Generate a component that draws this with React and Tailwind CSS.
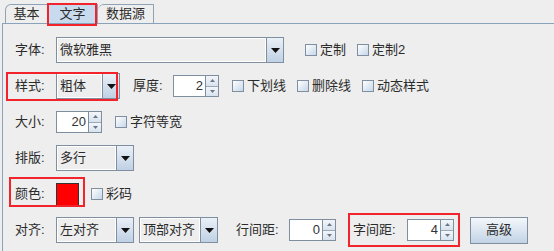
import React from "react";

// Swing (Metal) style text settings panel

function Combo({ value, className }) {
  return (
    <div className={`flex h-[26px] shrink-0 border border-[#7f8fa0] bg-[#eeeeee] ${className}`}>
      <div className="flex flex-1 items-center border border-white pl-[2px] pr-[2px]">{value}</div>
      <div className="flex w-[17px] items-center justify-center border-l border-[#7f8fa0] bg-linear-to-b from-[#eaf0f7] to-[#bfd1e4]">
        <svg width="9" height="5" viewBox="0 0 9 5">
          <path d="M0 0h9L4.5 5z" fill="#111" />
        </svg>
      </div>
    </div>
  );
}

function Spinner({ value, className }) {
  return (
    <div className={`flex h-[22px] shrink-0 border border-[#7f8fa0] ${className}`}>
      <div className="flex flex-1 items-center justify-end bg-white pr-[2px] text-[#333]">{value}</div>
      <div className="flex w-[13px] flex-col border-l border-[#7f8fa0]">
        <div className="flex flex-1 items-center justify-center border-b border-[#9aa9b8] bg-linear-to-b from-[#f3f6fa] to-[#d8e3ee]">
          <svg width="5" height="3" viewBox="0 0 5 3">
            <path d="M0 3h5L2.5 0z" fill="#6b7785" />
          </svg>
        </div>
        <div className="flex flex-1 items-center justify-center bg-linear-to-b from-[#f3f6fa] to-[#d8e3ee]">
          <svg width="5" height="3" viewBox="0 0 5 3">
            <path d="M0 0h5L2.5 3z" fill="#6b7785" />
          </svg>
        </div>
      </div>
    </div>
  );
}

function Check({ label, className = "" }) {
  return (
    <div className={`flex shrink-0 items-center gap-[3px] ${className}`}>
      <div className="h-[12px] w-[12px] border border-[#7f8fa0] bg-linear-to-br from-white to-[#c6d7e9]" />
      <span>{label}</span>
    </div>
  );
}

function Label({ children, className = "w-[41px]" }) {
  return <span className={`shrink-0 ${className}`}>{children}</span>;
}

export default function App() {
  return (
    <div className="h-[251px] w-[554px] overflow-hidden bg-[#eeeeee] font-['Liberation_Sans','Noto_Sans_CJK_SC',sans-serif] text-[13px] leading-[16px] text-[#2b2b2b]">
      {/* tabs */}
      <div className="flex h-[23px] items-end pl-[5px]">
        <div className="flex h-[19px] w-[43px] items-center justify-center rounded-tl-[6px] border border-b-0 border-[#8fa2b6] bg-[#eeeeee]">
          基本
        </div>
        <div className="relative flex h-[19px] w-[50px] items-center justify-center border-t border-r border-[#8fa2b6] bg-[#c8dbee]">
          文字
          <div className="absolute -left-[1px] -top-[2px] h-[23px] w-[50px] border-2 border-[#f2232b]" />
        </div>
        <div className="flex h-[19px] w-[56px] items-center justify-center rounded-tl-[6px] border border-b-0 border-l-0 border-[#8fa2b6] bg-[#eeeeee]">
          数据源
        </div>
      </div>

      {/* panel */}
      <div className="ml-[2px] flex h-[228px] flex-col gap-[10px] border-l border-t border-[#8aa3bd] pl-[12px] pt-[13px]">
        {/* 字体 */}
        <div className="flex h-[26px] items-center">
          <Label>字体:</Label>
          <Combo value="微软雅黑" className="w-[228px]" />
          <Check label="定制" className="ml-[21px]" />
          <Check label="定制2" className="ml-[11px]" />
        </div>

        {/* 样式 */}
        <div className="relative flex h-[26px] items-center">
          <Label>样式:</Label>
          <Combo value="粗体" className="w-[64px]" />
          <Label className="ml-[13px] w-[40px]">厚度:</Label>
          <Spinner value="2" className="w-[46px]" />
          <Check label="下划线" className="ml-[13px]" />
          <Check label="删除线" className="ml-[11px]" />
          <Check label="动态样式" className="ml-[11px]" />
          <div className="absolute -left-[9px] -top-[1px] h-[29px] w-[112px] border-2 border-[#f2232b]" />
        </div>

        {/* 大小 */}
        <div className="flex h-[26px] items-center">
          <Label>大小:</Label>
          <Spinner value="20" className="w-[46px]" />
          <Check label="字符等宽" className="ml-[13px]" />
        </div>

        {/* 排版 */}
        <div className="flex h-[26px] items-center">
          <Label>排版:</Label>
          <Combo value="多行" className="w-[78px]" />
        </div>

        {/* 颜色 */}
        <div className="relative flex h-[26px] items-center">
          <Label>颜色:</Label>
          <div className="h-[23px] w-[23px] shrink-0 border border-[#333] bg-[#ff0000]" />
          <Check label="彩码" className="ml-[12px]" />
          <div className="absolute -left-[6px] -top-[4px] h-[30px] w-[76px] border-2 border-[#f2232b]" />
        </div>

        {/* 对齐 */}
        <div className="flex h-[26px] items-center">
          <Label>对齐:</Label>
          <Combo value="左对齐" className="w-[78px]" />
          <Combo value="顶部对齐" className="ml-[5px] w-[79px]" />
          <Label className="ml-[18px] w-[53px]">行间距:</Label>
          <Spinner value="0" className="w-[47px]" />
          <div className="relative ml-[17px] flex items-center">
            <Label className="w-[54px]">字间距:</Label>
            <Spinner value="4" className="w-[47px]" />
            <div className="absolute -left-[5px] -top-[6px] h-[34px] w-[112px] border-2 border-[#f2232b]" />
          </div>
          <button className="ml-[16px] flex h-[27px] w-[58px] shrink-0 items-center justify-center border border-[#7f8fa0] bg-linear-to-b from-[#f4f7fb] to-[#c2d3e5] text-[#2b2b2b]">
            高级
          </button>
        </div>
      </div>
    </div>
  );
}
